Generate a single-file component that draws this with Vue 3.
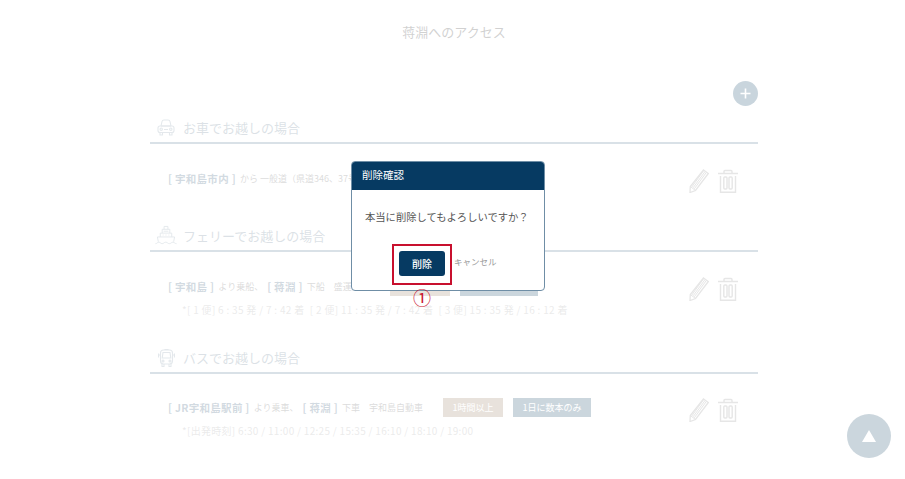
<script setup>
const sections = [
  {
    id: 'car',
    title: 'お車でお越しの場合',
    lead: '[ 宇和島市内 ]',
    text: 'から 一般道（県道346、37号線）で約60分',
    tags: [],
    note: '',
  },
  {
    id: 'ship',
    title: 'フェリーでお越しの場合',
    lead: '[ 宇和島 ]',
    text: 'より乗船、',
    lead2: '[ 蒋淵 ]',
    text2: '下船　盛運汽船',
    tags: ['1時間以上', '1日に数本のみ'],
    note: '*[ 1 便] 6 : 35 発 / 7 : 42 着\u2002[ 2 便] 11 : 35 発 / 7 : 42 着\u2002[ 3 便] 15 : 35 発 / 16 : 12 着',
  },
  {
    id: 'bus',
    title: 'バスでお越しの場合',
    lead: '[ JR宇和島駅前 ]',
    text: 'より乗車、',
    lead2: '[ 蒋淵 ]',
    text2: '下車　宇和島自動車',
    tags: ['1時間以上', '1日に数本のみ'],
    note: '*[出発時刻] 6:30 / 11:00 / 12:25 / 15:35 / 16:10 / 18:10 / 19:00',
  },
]
</script>

<template>
  <div class="page">
    <main class="container">
      <h1 class="page-title">蒋淵へのアクセス</h1>
      <div class="add-wrap">
        <button class="add" aria-label="追加">
          <svg viewBox="0 0 25 25" width="25" height="25"><path d="M12.5 7.5v10M7.5 12.5h10" stroke="#fff" stroke-width="1.6" fill="none" /></svg>
        </button>
      </div>

      <section v-for="s in sections" :key="s.id" class="section" :class="s.id">
        <h2 class="heading">
          <span class="h-icon">
            <svg v-if="s.id === 'car'" viewBox="0 0 18 17" width="18" height="17" fill="none" stroke="currentColor" stroke-width="1.100">
              <path d="M4 7 5 2.500C5.200 1.500 6 1 7 1h4c1 0 1.800.5 2 1.500L14 7" />
              <path d="M4 7h10" />
              <rect x="1" y="7" width="16" height="6.500" rx="2" />
              <circle cx="4.200" cy="10.200" r="1.200" /><circle cx="13.800" cy="10.200" r="1.200" />
              <path d="M7 10.500h4M3 13.500V16h2.500v-2.500M12.500 13.500V16H15v-2.500" />
            </svg>
            <svg v-else-if="s.id === 'ship'" viewBox="0 0 23 22" width="23" height="22" fill="none" stroke="currentColor" stroke-width="1">
              <path d="M9.500 4V1h4v3M7.500 8V4h8v4" />
              <path d="M5.500 12V8h12v4M3.500 17l-1-5h18l-1 5" />
              <path d="M9 6h5M8 10h1M11 10h1M14 10h1" />
              <path d="M.5 19c1.800 0 1.800-1.500 3.500-1.500S5.800 19 7.500 19s1.800-1.500 3.700-1.500S13.200 19 15 19s2-1.500 3.700-1.500 2 1.500 3.800 1.500" />
            </svg>
            <svg v-else viewBox="0 0 17 18" width="17" height="18" fill="none" stroke="currentColor" stroke-width="1.100">
              <rect x="2.500" y="1" width="12" height="14" rx="3" />
              <path d="M5 3.500h7l.8 5.500H4.200zM7 1V.5h3V1" />
              <circle cx="5" cy="12" r="1" /><circle cx="12" cy="12" r="1" />
              <path d="M.5 4.500v4M16.500 4.500v4M2.500 6h-2M16.500 6h-2M4 15v2.500h2V15M11 15v2.500h2V15" />
            </svg>
          </span>
          {{ s.title }}
        </h2>
        <div class="row">
          <div class="row-body">
            <div class="line">
              <b class="lead">{{ s.lead }}</b>
              <span class="txt">{{ s.text }}</span>
              <b v-if="s.lead2" class="lead">{{ s.lead2 }}</b>
              <span v-if="s.text2" class="txt">{{ s.text2 }}</span>
              <span v-for="t in s.tags" :key="t" class="tag" :class="{ alt: t !== '1時間以上' }">{{ t }}</span>
            </div>
            <div v-if="s.note" class="note">{{ s.note }}</div>
          </div>
          <div class="actions">
            <svg viewBox="0 0 20 24" width="20" height="24" fill="none" stroke="#aaa" stroke-width="1.300">
              <path d="M14.500 1 19.300 4.500 6.500 21.500 1 23.500 1.300 17.500z" />
              <path d="M1.300 17.500 6.500 21.500M4.100 18.800 15.900 2.700M2.800 18 14.500 1.800M5.300 19.800 17.300 3.500" stroke-width="1" />
            </svg>
            <svg viewBox="0 0 20 24" width="20" height="24" fill="none" stroke="#aaa" stroke-width="1.400">
              <path d="M0 4.500h20M6 4.500V2.500q0-1 1-1h6q1 0 1 1v2" />
              <path d="M2.500 7v16.300h15V7" />
              <rect x="5.800" y="8" width="3.200" height="12" rx="1" />
              <rect x="11" y="8" width="3.200" height="12" rx="1" />
            </svg>
          </div>
        </div>
      </section>
    </main>

    <div class="veil"></div>

    <button class="to-top" aria-label="ページ上部へ">
      <svg viewBox="0 0 14 12" width="14" height="12"><path d="M7 0l7 12H0z" fill="#fff" /></svg>
    </button>

    <div class="dialog" role="dialog">
      <div class="dialog-head">削除確認</div>
      <div class="dialog-body">
        <p class="message">本当に削除してもよろしいですか？</p>
        <div class="dialog-actions">
          <button class="btn-del">削除</button>
          <a class="cancel">キャンセル</a>
        </div>
      </div>
    </div>

    <div class="mark"></div>
    <div class="mark-no">①</div>
  </div>
</template>

<style>
html, body { margin: 0; background: #fff; }
</style>

<style scoped>
.page {
  position: relative;
  height: 479px;
  overflow: hidden;
  padding-left: 150px;
  box-sizing: border-box;
  font-family: "Noto Sans CJK JP", "Noto Sans", sans-serif;
  color: #4b738e;
}
.container { width: 608px; }
.page-title {
  margin: 0;
  padding-top: 22px;
  height: 81px;
  box-sizing: border-box;
  text-align: center;
  font-size: 13px;
  line-height: 20px;
  font-weight: 400;
  color: #666;
}
.add-wrap { display: flex; justify-content: flex-end; height: 32px; }
.add {
  width: 25px; height: 25px; padding: 0; border: 0; border-radius: 50%;
  background: #4b738e; display: block;
}
.add svg { display: block; }
.heading {
  margin: 0;
  height: 31px;
  box-sizing: border-box;
  border-bottom: 2px solid #7f9bb0;
  display: flex;
  align-items: center;
  padding: 0 0 0 5px;
  font-size: 13px;
  font-weight: 400;
  color: #8a9cab;
}
.h-icon { width: 22px; margin-right: 6px; display: flex; align-items: center; justify-content: center; color: #a3b3bf; }
.section { margin-bottom: 22px; }
.section.ship { margin-bottom: 21px; }
.row { display: flex; padding: 22px 0 0 18px; justify-content: space-between; min-height: 33px; }
.section.bus .row { padding-top: 21px; }
.line { display: flex; align-items: center; height: 24px; white-space: nowrap; }
.lead { font-size: 10.500px; font-weight: 700; color: #6a8499; margin-right: 4px; letter-spacing: .3px; }
.txt { font-size: 9px; color: #8a8a8a; margin-right: 4px; }
.tag {
  height: 19px; line-height: 19px; padding: 0 9.500px; margin-left: 10px;
  background: #b29e8a; color: #fff; font-size: 9px;
}
.txt + .tag { margin-left: 16px; }
.tag.alt { background: #52768e; }
.note { height: 24px; line-height: 24px; font-size: 10px; color: #bbb; padding-left: 14px; white-space: nowrap; letter-spacing: .3px; }
.actions { display: flex; gap: 9px; padding-right: 20px; margin-top: 3px; align-self: flex-start; }
.actions svg { display: block; }
.veil { position: absolute; inset: 0; background: rgba(255, 255, 255, .7); }
.to-top {
  position: absolute; left: 847px; top: 414px; width: 44px; height: 44px;
  padding: 0; border: 0; border-radius: 50%;
  background: #cbd6dd; display: flex; align-items: center; justify-content: center;
}
.dialog {
  position: absolute; left: 351px; top: 161px; width: 194px; height: 130px;
  box-sizing: border-box; background: #fff;
  border: 1px solid #6f8ea6; border-radius: 4px; overflow: hidden;
}
.dialog-head {
  height: 28px; line-height: 25px; background: #063a62; color: #fff;
  font-size: 10.500px; padding-left: 10px;
}
.dialog-body { padding: 17px 13px 0; }
.message { margin: 0; font-size: 10.300px; line-height: 20px; color: #555; white-space: nowrap; }
.dialog-actions { display: flex; align-items: center; margin-top: 24px; padding-left: 34px; gap: 9px; }
.btn-del {
  width: 46px; height: 25px; padding: 0; border: 0; border-radius: 3px;
  background: #063a62; color: #fff; font: 500 10px "Noto Sans CJK JP", sans-serif;
}
.cancel { font-size: 8.500px; color: #999; margin-top: -5px; }
.mark {
  position: absolute; left: 392px; top: 244px; width: 60px; height: 41px;
  box-sizing: border-box; border: 2px solid #c8102e;
}
.mark-no {
  position: absolute; left: 411px; top: 286px; width: 22px; text-align: center;
  font-size: 18px; line-height: 22px; color: #c8102e;
}
</style>
